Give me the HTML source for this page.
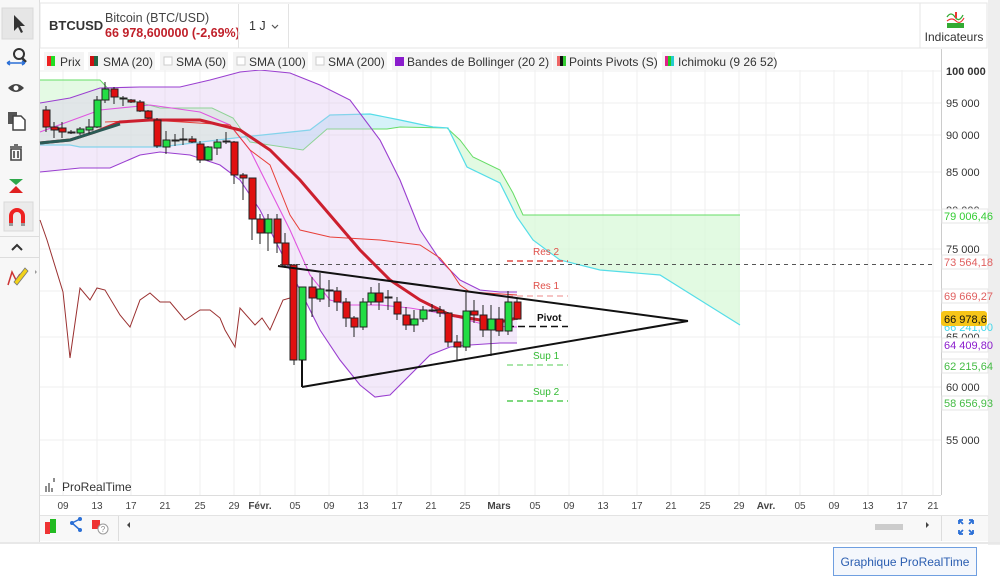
<!DOCTYPE html>
<html><head><meta charset="utf-8"><style>
body{margin:0;width:1000px;height:580px;overflow:hidden;background:#fff;font-family:"Liberation Sans",sans-serif;}
svg text{font-family:"Liberation Sans",sans-serif;}
</style></head><body>
<svg width="1000" height="580" viewBox="0 0 1000 580" xmlns="http://www.w3.org/2000/svg">
<rect x="0" y="0" width="1000" height="580" fill="#fff"/>
<rect x="988" y="0" width="12" height="545" fill="#eeeeee"/>
<rect x="0" y="545" width="1000" height="35" fill="#fff"/>
<rect x="0" y="542" width="1000" height="2" fill="#e8e8e8"/>
<!-- left sidebar -->
<rect x="0" y="0" width="39" height="542" fill="#f7f7f7"/>
<line x1="39.5" y1="0" x2="39.5" y2="542" stroke="#ddd"/>
<rect x="2" y="8" width="31" height="31" fill="#e6e6e6" stroke="#d8d8d8"/>
<path d="M14 15 L14 31 L18 27 L21 33 L23 32 L20 26 L25 26 Z" fill="#333"/>
<circle cx="19" cy="54" r="5" fill="none" stroke="#333" stroke-width="2"/><line x1="22" y1="58" x2="26" y2="62" stroke="#333" stroke-width="2.5"/>
<path d="M7 63 L25 63 M7 63 l3 -2 M7 63 l3 2 M25 63 l-3 -2 M25 63 l-3 2" stroke="#2a6fd6" stroke-width="1.5" fill="none"/>
<path d="M8 88 Q16 80 24 88 Q16 96 8 88Z" fill="#444"/><circle cx="16" cy="88" r="2.5" fill="#fff"/>
<rect x="8" y="112" width="9" height="12" fill="#555"/><path d="M13 116 h8 l4 4 v10 h-12z" fill="#fff" stroke="#444" stroke-width="1.5"/>
<path d="M10 147 h12 M14 145 h4 M11 149 h10 v11 h-10z M14 151 v7 M18 151 v7" stroke="#444" stroke-width="1.6" fill="none"/>
<path d="M9 179 L23 179 L16 185 Z" fill="#2ea84a"/><path d="M9 193 L23 193 L16 186 Z" fill="#e02020"/>
<rect x="4" y="202" width="29" height="29" fill="#ebebeb" stroke="#d8d8d8"/>
<path d="M11 225 V216 a6 6 0 0 1 12 0 V225" stroke="#e22" stroke-width="4" fill="none"/><rect x="9" y="223" width="4" height="3" fill="#999"/><rect x="21" y="223" width="4" height="3" fill="#999"/>
<line x1="0" y1="236.5" x2="39" y2="236.5" stroke="#ddd"/>
<path d="M12 250 L17 245 L22 250" stroke="#333" stroke-width="2" fill="none"/>
<line x1="0" y1="257.5" x2="39" y2="257.5" stroke="#ddd"/>
<path d="M8 285 L12 272 L16 280 L20 274" stroke="#c33" stroke-width="1.5" fill="none"/><path d="M14 282 L25 268 L28 271 L17 285 Z" fill="#f2d21a" stroke="#777" stroke-width="0.8"/>
<path d="M35 270 l2 2 l-2 2z" fill="#999"/>
<!-- header -->
<rect x="40" y="3" width="880" height="45" fill="#fff" stroke="#e5e5e5"/>
<text x="49" y="30" font-size="13" font-weight="bold" fill="#333">BTCUSD</text>
<text x="105" y="22" font-size="12.5" fill="#444">Bitcoin (BTC/USD)</text>
<text x="105" y="37" font-size="12.5" font-weight="bold" fill="#c0202a">66 978,600000 (-2,69%)</text>
<line x1="238.5" y1="4" x2="238.5" y2="48" stroke="#e3e3e3"/>
<text x="249" y="30" font-size="12.5" fill="#333">1 J</text>
<path d="M272 25 l3 3 l3 -3" stroke="#555" stroke-width="1.2" fill="none"/>
<line x1="288.5" y1="4" x2="288.5" y2="48" stroke="#e3e3e3"/>
<rect x="920" y="3" width="67" height="45" fill="#fff" stroke="#e5e5e5"/>
<path d="M947 17 q4 -6 8 0 q4 6 8 -2" stroke="#3a3" stroke-width="1.3" fill="none"/><path d="M947 21 q5 -4 9 0 q4 4 8 -3" stroke="#e33" stroke-width="1.2" fill="none"/>
<rect x="947" y="23" width="17" height="5" fill="#3a3"/><rect x="955" y="12" width="2" height="6" fill="#e33"/>
<text x="954" y="41" font-size="12" fill="#333" text-anchor="middle">Indicateurs</text>
<!-- chart area -->
<rect x="40" y="49" width="901" height="446" fill="#fff"/>
<g stroke="#efefef" stroke-width="1">
<line x1="63" y1="70" x2="63" y2="495"/><line x1="97" y1="70" x2="97" y2="495"/><line x1="131" y1="70" x2="131" y2="495"/><line x1="165" y1="70" x2="165" y2="495"/><line x1="200" y1="70" x2="200" y2="495"/><line x1="234" y1="70" x2="234" y2="495"/><line x1="260" y1="70" x2="260" y2="495"/><line x1="295" y1="70" x2="295" y2="495"/><line x1="329" y1="70" x2="329" y2="495"/><line x1="363" y1="70" x2="363" y2="495"/><line x1="397" y1="70" x2="397" y2="495"/><line x1="431" y1="70" x2="431" y2="495"/><line x1="465" y1="70" x2="465" y2="495"/><line x1="499" y1="70" x2="499" y2="495"/><line x1="535" y1="70" x2="535" y2="495"/><line x1="569" y1="70" x2="569" y2="495"/><line x1="603" y1="70" x2="603" y2="495"/><line x1="637" y1="70" x2="637" y2="495"/><line x1="671" y1="70" x2="671" y2="495"/><line x1="705" y1="70" x2="705" y2="495"/><line x1="739" y1="70" x2="739" y2="495"/><line x1="766" y1="70" x2="766" y2="495"/><line x1="800" y1="70" x2="800" y2="495"/><line x1="834" y1="70" x2="834" y2="495"/><line x1="868" y1="70" x2="868" y2="495"/><line x1="902" y1="70" x2="902" y2="495"/><line x1="933" y1="70" x2="933" y2="495"/>
<line x1="40" y1="71" x2="941" y2="71"/><line x1="40" y1="103" x2="941" y2="103"/><line x1="40" y1="135" x2="941" y2="135"/><line x1="40" y1="172" x2="941" y2="172"/><line x1="40" y1="210" x2="941" y2="210"/><line x1="40" y1="249" x2="941" y2="249"/><line x1="40" y1="291" x2="941" y2="291"/><line x1="40" y1="337" x2="941" y2="337"/><line x1="40" y1="387" x2="941" y2="387"/><line x1="40" y1="440" x2="941" y2="440"/>
</g>
<line x1="941.5" y1="49" x2="941.5" y2="495" stroke="#ccc"/>
<line x1="40" y1="495.5" x2="941" y2="495.5" stroke="#ddd"/>
<!-- ichimoku cloud -->
<path d="M40 80 L100 80 L115 96 L160 108 L212 108 L233 118 L243 137 L160 147 L80 147 L70 145 L40 145 Z" fill="#d2f7d2" fill-opacity="0.6"/>
<path d="M243 137 L250 142 L303 150 L327 129 L387 129 L400 127 L447 128 L433 127 L400 120 L370 114 L330 115 L310 130 Z" fill="#c4ecf7" fill-opacity="0.7"/>
<path d="M448 128 L460 140 L473 157 L500 170 L513 193 L523 215 L740 215 L740 325 L700 300 L660 275 L600 270 L560 260 L533 240 L517 217 L500 183 L467 167 Z" fill="#d6f8d6" fill-opacity="0.7"/>
<polyline points="40,80 100,80 115,96 160,108 212,108 233,118 250,142 303,150 327,129 387,129 400,127 447,128 460,140 473,157 500,170 513,193 523,215 740,215" fill="none" stroke="#66dd66" stroke-width="1"/>
<polyline points="40,145 70,145 80,147 160,147 243,137 310,130 330,115 370,114 400,120 433,127 448,128 467,167 500,183 517,217 533,240 560,260 600,270 660,275 700,300 740,325" fill="none" stroke="#55dde8" stroke-width="1.2"/>
<!-- bollinger -->
<path d="M40 103 L70 98 L100 88 L140 87 L180 87 L210 80 L240 72 L260 70 L290 73 L320 85 L350 100 L380 140 L400 180 L420 230 L440 260 L460 280 L480 290 L500 292 L517 292 L517 343 L500 343 L470 345 L450 347 L430 355 L410 375 L390 395 L375 397 L360 385 L340 360 L320 330 L300 290 L280 250 L260 210 L240 180 L220 165 L190 155 L160 152 L140 155 L110 168 L80 168 L40 172 Z" fill="#dcc0f0" fill-opacity="0.35"/>
<polyline points="40,103 70,98 100,88 140,87 180,87 210,80 240,72 260,70 290,73 320,85 350,100 380,140 400,180 420,230 440,260 460,280 480,290 500,292 517,292" fill="none" stroke="#9a3fd0" stroke-width="1.1"/>
<polyline points="40,172 80,168 110,168 140,155 160,152 190,155 220,165 240,180 260,210 280,250 300,290 320,330 340,360 360,385 375,397 390,395 410,375 430,355 450,347 470,345 500,343 517,343" fill="none" stroke="#9a3fd0" stroke-width="1.1"/>
<polyline points="40,132 100,110 150,105 200,112 230,125 250,150 270,190 290,230 310,275 330,300 350,305 380,305 410,308 440,313 460,318 490,326 517,327" fill="none" stroke="#e055e0" stroke-width="1.1"/>
<!-- red thin -->
<polyline points="105,122 150,120 230,125 250,150 270,165 290,215 300,230 330,237 380,240 420,245 440,258 450,270 460,285 470,292 517,295" fill="none" stroke="#e8403a" stroke-width="1"/>
<!-- chikou brown -->
<polyline points="40,220 47,240 63,292 70,358 80,288 90,300 97,288 105,290 120,315 130,327 140,300 150,293 160,302 170,302 185,320 200,310 210,310 220,318 225,330 235,347 240,308 255,325 262,318 270,330 283,300 290,298" fill="none" stroke="#9a3030" stroke-width="1"/>
<!-- SMA thick -->
<polyline points="40,143 70,140 95,132 120,122 150,120 200,120 240,130 270,150 300,180 330,215 360,250 390,280 420,300 450,315 480,320 500,322 517,318" fill="none" stroke="#cc1f2e" stroke-width="3"/>
<polyline points="40,143 70,140 95,132 120,124" fill="none" stroke="#2a5a55" stroke-width="3"/>
<!-- pivot levels -->
<line x1="280" y1="264.5" x2="932" y2="264.5" stroke="#555" stroke-dasharray="4,4"/>
<line x1="507" y1="261" x2="568" y2="261" stroke="#e0504a" stroke-width="1.5" stroke-dasharray="6,4"/>
<line x1="507" y1="296" x2="568" y2="296" stroke="#e88" stroke-dasharray="6,4"/>
<line x1="507" y1="326.5" x2="568" y2="326.5" stroke="#111" stroke-width="1.6" stroke-dasharray="7,4"/>
<line x1="507" y1="365" x2="568" y2="365" stroke="#5c5" stroke-dasharray="6,4"/>
<line x1="507" y1="401" x2="568" y2="401" stroke="#5c5" stroke-width="1.5" stroke-dasharray="6,4"/>
<text x="533" y="255" font-size="10" fill="#e0504a">Res 2</text>
<text x="533" y="289" font-size="10" fill="#e0504a">Res 1</text>
<text x="537" y="321" font-size="10" font-weight="bold" fill="#111">Pivot</text>
<text x="533" y="359" font-size="10" fill="#3b3">Sup 1</text>
<text x="533" y="395" font-size="10" fill="#3b3">Sup 2</text>
<!-- candles -->
<g stroke="#222" stroke-width="1">
<line x1="46" y1="106" x2="46" y2="132"/><rect x="43" y="110" width="7" height="17" fill="#e01010"/>
<line x1="54" y1="122" x2="54" y2="138"/><rect x="51" y="127" width="7" height="3" fill="#e01010"/>
<line x1="62" y1="122" x2="62" y2="138"/><rect x="59" y="128" width="7" height="4" fill="#e01010"/>
<line x1="71" y1="130" x2="71" y2="134"/><rect x="68" y="132" width="7" height="1" fill="#222"/>
<line x1="80" y1="127" x2="80" y2="135"/><rect x="77" y="129" width="7" height="4" fill="#22dd44"/>
<line x1="89" y1="119" x2="89" y2="134"/><rect x="86" y="127" width="7" height="3" fill="#22dd44"/>
<line x1="97" y1="96" x2="97" y2="128"/><rect x="94" y="100" width="7" height="27" fill="#22dd44"/>
<line x1="105" y1="82" x2="105" y2="103"/><rect x="102" y="89" width="7" height="11" fill="#22dd44"/>
<line x1="114" y1="87" x2="114" y2="104"/><rect x="111" y="89" width="7" height="8" fill="#e01010"/>
<line x1="123" y1="96" x2="123" y2="106"/><rect x="120" y="98" width="7" height="1" fill="#e01010"/>
<line x1="131" y1="99" x2="131" y2="103"/><rect x="128" y="100" width="7" height="2" fill="#e01010"/>
<line x1="140" y1="100" x2="140" y2="112"/><rect x="137" y="102" width="7" height="9" fill="#e01010"/>
<line x1="148" y1="110" x2="148" y2="119"/><rect x="145" y="111" width="7" height="7" fill="#e01010"/>
<line x1="157" y1="118" x2="157" y2="148"/><rect x="154" y="120" width="7" height="26" fill="#e01010"/>
<line x1="166" y1="131" x2="166" y2="154"/><rect x="163" y="140" width="7" height="7" fill="#22dd44"/>
<line x1="175" y1="134" x2="175" y2="146"/><rect x="172" y="140" width="7" height="1" fill="#222"/>
<line x1="183" y1="128" x2="183" y2="145"/><rect x="180" y="139" width="7" height="1" fill="#222"/>
<line x1="192" y1="136" x2="192" y2="143"/><rect x="189" y="139" width="7" height="3" fill="#e01010"/>
<line x1="200" y1="141" x2="200" y2="163"/><rect x="197" y="144" width="7" height="16" fill="#e01010"/>
<line x1="208" y1="146" x2="208" y2="161"/><rect x="205" y="147" width="7" height="13" fill="#22dd44"/>
<line x1="217" y1="139" x2="217" y2="155"/><rect x="214" y="142" width="7" height="6" fill="#22dd44"/>
<line x1="226" y1="132" x2="226" y2="144"/><rect x="223" y="141" width="7" height="1" fill="#222"/>
<line x1="234" y1="141" x2="234" y2="184"/><rect x="231" y="142" width="7" height="33" fill="#e01010"/>
<line x1="243" y1="173" x2="243" y2="200"/><rect x="240" y="175" width="7" height="3" fill="#e01010"/>
<line x1="252" y1="178" x2="252" y2="240"/><rect x="249" y="178" width="7" height="41" fill="#e01010"/>
<line x1="260" y1="214" x2="260" y2="244"/><rect x="257" y="219" width="7" height="14" fill="#e01010"/>
<line x1="268" y1="214" x2="268" y2="251"/><rect x="265" y="219" width="7" height="14" fill="#22dd44"/>
<line x1="277" y1="214" x2="277" y2="253"/><rect x="274" y="219" width="7" height="24" fill="#e01010"/>
<line x1="285" y1="233" x2="285" y2="268"/><rect x="282" y="243" width="7" height="22" fill="#e01010"/>
<line x1="294" y1="264" x2="294" y2="365"/><rect x="290" y="265" width="7" height="95" fill="#e01010"/>
<line x1="302" y1="287" x2="302" y2="386"/><rect x="299" y="287" width="7" height="73" fill="#22dd44"/>
<line x1="312" y1="277" x2="312" y2="317"/><rect x="309" y="287" width="7" height="11" fill="#e01010"/>
<line x1="320" y1="273" x2="320" y2="302"/><rect x="317" y="289" width="7" height="10" fill="#22dd44"/>
<line x1="329" y1="280" x2="329" y2="307"/><rect x="326" y="290" width="7" height="1" fill="#222"/>
<line x1="337" y1="287" x2="337" y2="311"/><rect x="334" y="291" width="7" height="11" fill="#e01010"/>
<line x1="346" y1="298" x2="346" y2="327"/><rect x="343" y="302" width="7" height="16" fill="#e01010"/>
<line x1="354" y1="316" x2="354" y2="337"/><rect x="351" y="318" width="7" height="9" fill="#e01010"/>
<line x1="363" y1="298" x2="363" y2="330"/><rect x="360" y="302" width="7" height="25" fill="#22dd44"/>
<line x1="371" y1="287" x2="371" y2="305"/><rect x="368" y="293" width="7" height="9" fill="#22dd44"/>
<line x1="379" y1="283" x2="379" y2="310"/><rect x="376" y="293" width="7" height="9" fill="#e01010"/>
<line x1="388" y1="290" x2="388" y2="310"/><rect x="385" y="297" width="7" height="1" fill="#222"/>
<line x1="397" y1="297" x2="397" y2="320"/><rect x="394" y="302" width="7" height="12" fill="#e01010"/>
<line x1="406" y1="307" x2="406" y2="330"/><rect x="403" y="315" width="7" height="10" fill="#e01010"/>
<line x1="414" y1="310" x2="414" y2="332"/><rect x="411" y="319" width="7" height="6" fill="#22dd44"/>
<line x1="423" y1="306" x2="423" y2="322"/><rect x="420" y="310" width="7" height="9" fill="#22dd44"/>
<line x1="432" y1="304" x2="432" y2="312"/><rect x="429" y="310" width="7" height="1" fill="#222"/>
<line x1="440" y1="306" x2="440" y2="317"/><rect x="437" y="310" width="7" height="3" fill="#e01010"/>
<line x1="448" y1="312" x2="448" y2="347"/><rect x="445" y="313" width="7" height="29" fill="#e01010"/>
<line x1="457" y1="335" x2="457" y2="360"/><rect x="454" y="342" width="7" height="5" fill="#e01010"/>
<line x1="466" y1="292" x2="466" y2="351"/><rect x="463" y="311" width="7" height="36" fill="#22dd44"/>
<line x1="474" y1="300" x2="474" y2="323"/><rect x="471" y="311" width="7" height="4" fill="#e01010"/>
<line x1="483" y1="305" x2="483" y2="337"/><rect x="480" y="315" width="7" height="15" fill="#e01010"/>
<line x1="491" y1="305" x2="491" y2="356"/><rect x="488" y="319" width="7" height="11" fill="#22dd44"/>
<line x1="499" y1="307" x2="499" y2="336"/><rect x="496" y="319" width="7" height="12" fill="#e01010"/>
<line x1="508" y1="291" x2="508" y2="335"/><rect x="505" y="302" width="7" height="29" fill="#22dd44"/>
<line x1="517" y1="298" x2="517" y2="320"/><rect x="514" y="302" width="7" height="17" fill="#e01010"/>
</g>
<!-- triangle -->
<g stroke="#111" stroke-width="2" fill="none">
<line x1="278" y1="266" x2="688" y2="321"/><line x1="302" y1="387" x2="688" y2="321"/><line x1="302" y1="360" x2="302" y2="387"/>
</g>
<!-- legend -->
<g font-size="12" fill="#333">
<rect x="44" y="52" width="40" height="18" fill="#f4f4f4"/><rect x="47" y="56" width="4" height="10" fill="#e22"/><rect x="51" y="56" width="4" height="10" fill="#2d2"/><text x="60" y="66">Prix</text>
<rect x="88" y="52" width="67" height="18" fill="#f4f4f4"/><rect x="90" y="56" width="4" height="10" fill="#c11"/><rect x="94" y="56" width="4" height="10" fill="#264"/><text x="103" y="66">SMA (20)</text>
<rect x="160" y="52" width="68" height="18" fill="#f4f4f4"/><rect x="164" y="57" width="8" height="8" fill="#fff" stroke="#ccc"/><text x="176" y="66">SMA (50)</text>
<rect x="233" y="52" width="75" height="18" fill="#f4f4f4"/><rect x="237" y="57" width="8" height="8" fill="#fff" stroke="#ccc"/><text x="249" y="66">SMA (100)</text>
<rect x="312" y="52" width="75" height="18" fill="#f4f4f4"/><rect x="316" y="57" width="8" height="8" fill="#fff" stroke="#ccc"/><text x="328" y="66">SMA (200)</text>
<rect x="392" y="52" width="160" height="18" fill="#f4f4f4"/><rect x="395" y="57" width="9" height="9" fill="#8a1ccc"/><text x="407" y="66">Bandes de Bollinger (20 2)</text>
<rect x="553" y="52" width="104" height="18" fill="#f4f4f4"/><rect x="557" y="56" width="3" height="10" fill="#e66"/><rect x="560" y="56" width="3" height="10" fill="#111"/><rect x="563" y="56" width="3" height="10" fill="#3c3"/><text x="569" y="66">Points Pivots (S)</text>
<rect x="662" y="52" width="113" height="18" fill="#f4f4f4"/><rect x="665" y="56" width="3" height="10" fill="#e1208a"/><rect x="668" y="56" width="3" height="10" fill="#2c2"/><rect x="671" y="56" width="3" height="10" fill="#2cc"/><text x="678" y="66">Ichimoku (9 26 52)</text>
</g>
<!-- price axis -->
<g font-size="11" fill="#333">
<text x="946" y="75" font-weight="bold">100 000</text>
<text x="946" y="107">95 000</text>
<text x="946" y="139">90 000</text>
<text x="946" y="176">85 000</text>
<text x="946" y="214">80 000</text>
<text x="946" y="253">75 000</text>
<text x="946" y="341">65 000</text>
<text x="946" y="391">60 000</text>
<text x="946" y="444">55 000</text>
</g>
<g font-size="11">
<rect x="942" y="209" width="46" height="14" fill="#fff" stroke="#e5e5e5"/><text x="944" y="220" fill="#3c3">79 006,46</text>
<rect x="942" y="255" width="46" height="14" fill="#fff" stroke="#e5e5e5"/><text x="944" y="266" fill="#e06060">73 564,18</text>
<rect x="942" y="289" width="46" height="14" fill="#fff" stroke="#e5e5e5"/><text x="944" y="300" fill="#e06060">69 669,27</text>
<text x="944" y="331" fill="#44d8ea">66 241,00</text>
<rect x="942" y="338" width="46" height="14" fill="#fff" stroke="#e5e5e5"/><text x="944" y="349" fill="#8a1ccc">64 409,80</text>
<rect x="942" y="359" width="46" height="14" fill="#fff" stroke="#e5e5e5"/><text x="944" y="370" fill="#4b4">62 215,64</text>
<rect x="942" y="396" width="46" height="14" fill="#fff" stroke="#e5e5e5"/><text x="944" y="407" fill="#4b4">58 656,93</text>
<rect x="941" y="311" width="46" height="15" rx="3" fill="#f7c518"/><text x="944" y="323" fill="#111">66 978,6</text>
</g>
<!-- watermark -->
<path d="M46 492 v-6 M49 492 v-9 M52 492 v-4 M54 482 v-4" stroke="#444" stroke-width="1.2"/>
<text x="62" y="491" font-size="12" fill="#333">ProRealTime</text>
<!-- date axis -->
<g font-size="10" fill="#444" text-anchor="middle">
<text x="63" y="509">09</text><text x="97" y="509">13</text><text x="131" y="509">17</text><text x="165" y="509">21</text><text x="200" y="509">25</text><text x="234" y="509">29</text><text x="260" y="509" font-weight="bold">Févr.</text><text x="295" y="509">05</text><text x="329" y="509">09</text><text x="363" y="509">13</text><text x="397" y="509">17</text><text x="431" y="509">21</text><text x="465" y="509">25</text><text x="499" y="509" font-weight="bold">Mars</text><text x="535" y="509">05</text><text x="569" y="509">09</text><text x="603" y="509">13</text><text x="637" y="509">17</text><text x="671" y="509">21</text><text x="705" y="509">25</text><text x="739" y="509">29</text><text x="766" y="509" font-weight="bold">Avr.</text><text x="800" y="509">05</text><text x="834" y="509">09</text><text x="868" y="509">13</text><text x="902" y="509">17</text><text x="933" y="509">21</text>
</g>
<!-- bottom toolbar -->
<rect x="40" y="515" width="948" height="26" fill="#f8f8f8"/>
<line x1="40" y1="515.5" x2="988" y2="515.5" stroke="#e3e3e3"/>
<line x1="118.5" y1="516" x2="118.5" y2="541" stroke="#ddd"/>
<line x1="941.5" y1="516" x2="941.5" y2="541" stroke="#ddd"/>
<rect x="45" y="522" width="5" height="12" fill="#e33"/><rect x="50" y="519" width="6" height="14" fill="#2b2"/>
<circle cx="72" cy="523" r="2" fill="#2a6fd6"/><circle cx="80" cy="519" r="2" fill="#2a6fd6"/><circle cx="80" cy="530" r="2" fill="#2a6fd6"/><path d="M80 519 L72 523 L80 530" stroke="#2a6fd6" fill="none" stroke-width="1.5"/>
<rect x="92" y="520" width="8" height="9" fill="#e33"/><circle cx="103" cy="529" r="5" fill="#fff" stroke="#999"/><text x="103" y="532" font-size="8" fill="#888" text-anchor="middle">?</text>
<path d="M127 525 l3 -3 v6 z" fill="#444"/>
<rect x="875" y="524" width="28" height="6" fill="#ccc"/>
<path d="M926 522 l3 3 l-3 3 z" fill="#444"/>
<g stroke="#2a6fd6" stroke-width="1.8" fill="none"><path d="M959 520 h4 M959 520 v4 M959 520 l4 4 M973 520 h-4 M973 520 v4 M973 520 l-4 4 M959 534 h4 M959 534 v-4 M959 534 l4 -4 M973 534 h-4 M973 534 v-4 M973 534 l-4 -4"/></g>
<!-- button -->
<rect x="833.5" y="547.5" width="143" height="28" fill="#f4f7fc" stroke="#6f9fe0"/>
<text x="905" y="566" font-size="12" fill="#2a5db0" text-anchor="middle">Graphique ProRealTime</text>
</svg>
</body></html>
